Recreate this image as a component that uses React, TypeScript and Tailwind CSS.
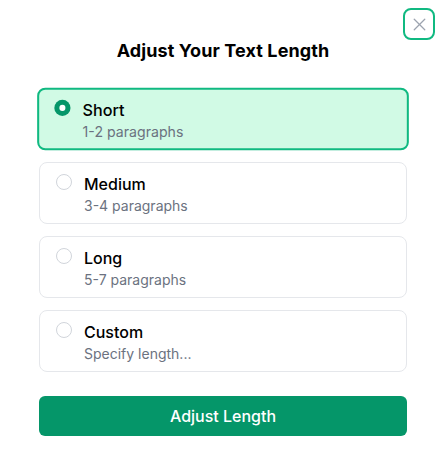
import React, { useState } from "react";
import { X } from "lucide-react";

const options = [
  { id: "short", label: "Short", desc: "1-2 paragraphs" },
  { id: "medium", label: "Medium", desc: "3-4 paragraphs" },
  { id: "long", label: "Long", desc: "5-7 paragraphs" },
  { id: "custom", label: "Custom", desc: "Specify length..." },
];

export default function App() {
  const [selected, setSelected] = useState("short");
  return (
    <div
      className="relative w-[441px] h-[457px] bg-white pl-[39px] pr-[34px] pt-[37px]"
      style={{ fontFamily: "Inter, 'Noto Sans', sans-serif" }}
    >
      <button className="absolute top-[8px] right-[6px] w-8 h-8 flex items-center justify-center rounded-lg border-2 border-[#10b981] text-[#9ca3af]">
        <X size={21} strokeWidth={1.5} />
      </button>
      <h2 className="text-center text-[18px] leading-7 font-bold tracking-[0.1px] text-black mb-[23px]">
        Adjust Your Text Length
      </h2>
      <div className="flex flex-col gap-3">
        {options.map((o) => {
          const active = o.id === selected;
          return (
            <div
              key={o.id}
              onClick={() => setSelected(o.id)}
              className={
                active
                  ? "h-[62px] flex items-start gap-3 pl-[15px] pr-4 py-[8px] rounded-lg border-2 border-[#10b981] bg-[#d1fae5] scale-[1.01]"
                  : "h-[62px] flex items-start gap-3 pl-4 pr-4 py-[9px] rounded-lg border border-[#e5e7eb] bg-white"
              }
            >
              {active ? (
                <span className="mt-[2px] w-4 h-4 rounded-full bg-[#059669] flex items-center justify-center shrink-0">
                  <span className="w-[6px] h-[6px] rounded-full bg-white" />
                </span>
              ) : (
                <span className="mt-[2px] w-4 h-4 rounded-full border border-[#d1d5db] bg-white shrink-0" />
              )}
              <div className="flex flex-col">
                <span className="text-[16px] leading-6 font-medium text-black">{o.label}</span>
                <span className="text-[14px] leading-5 text-[#6b7280]">{o.desc}</span>
              </div>
            </div>
          );
        })}
      </div>
      <button className="mt-6 w-full h-10 rounded-md bg-[#059669] text-white text-[16px] font-medium">
        Adjust Length
      </button>
    </div>
  );
}
